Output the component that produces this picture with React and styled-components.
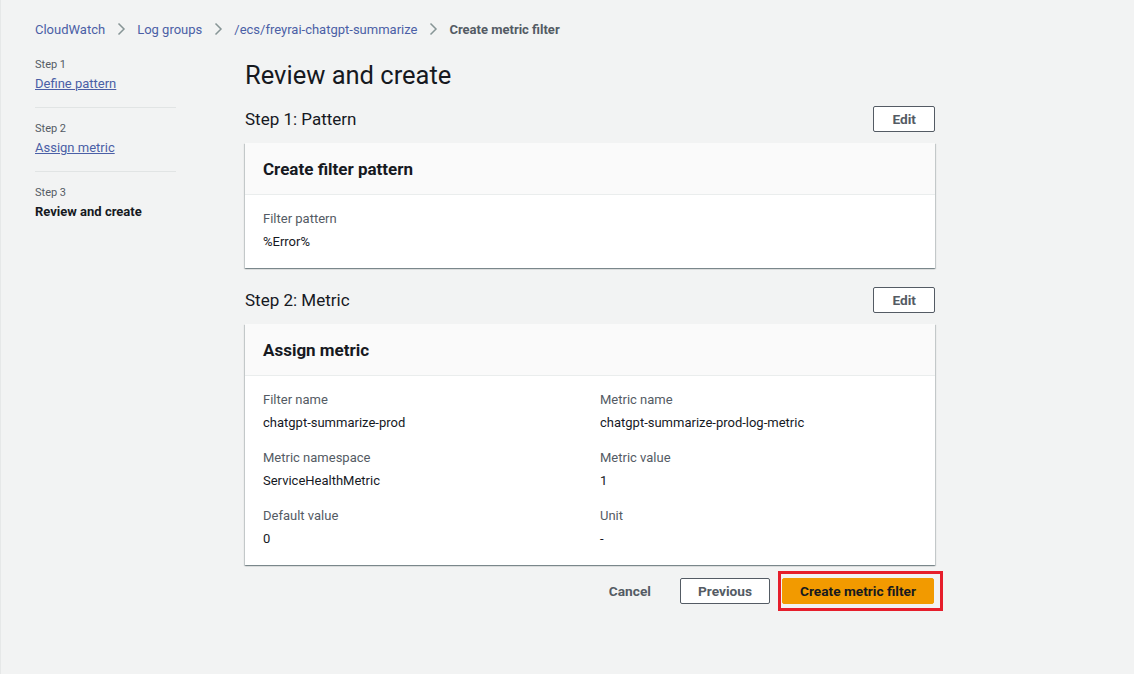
import React from 'react';
import styled, { createGlobalStyle } from 'styled-components';

const GlobalStyle = createGlobalStyle`
  html, body {
    margin: 0;
    padding: 0;
    background: #f2f3f3;
    font-family: Roboto, "Liberation Sans", Arial, sans-serif;
    color: #16191f;
  }
  #root {
    min-height: 674px;
  }
`;

const Page = styled.div`
  min-height: 674px;
  box-sizing: border-box;
  border-left: 1px solid #e6e8e8;
  padding: 20px 34px 0 34px;
`;

const Breadcrumbs = styled.nav`
  display: flex;
  align-items: center;
  gap: 10px;
  font-size: 13px;
  height: 18px;
`;

const Crumb = styled.a`
  color: #4b5fa6;
  text-decoration: none;
  cursor: pointer;
`;

const CurrentCrumb = styled.span`
  color: #545b64;
  font-weight: 700;
`;

const Chevron = () => (
  <svg width="12" height="14" viewBox="0 0 12 14" fill="none">
    <path d="M3.5 1.5 L9 7 L3.5 12.5" stroke="#879596" strokeWidth="1.5" />
  </svg>
);

const Layout = styled.div`
  display: flex;
  gap: 69px;
  margin-top: 19px;
`;

const SideNav = styled.ol`
  list-style: none;
  margin: 1px 0 0;
  padding: 0;
  width: 141px;
  flex-shrink: 0;
`;

const StepItem = styled.li`
  padding: 0 0 14px;
  margin-bottom: 14px;
  border-bottom: ${p => (p.$last ? 'none' : '1px solid #e1e4e4')};
`;

const StepLabel = styled.div`
  font-size: 11px;
  color: #545b64;
  line-height: 14px;
`;

const StepLink = styled.a`
  display: block;
  margin-top: 3px;
  font-size: 13px;
  line-height: 18px;
  color: #4b5fa6;
  text-decoration: underline;
  cursor: pointer;
`;

const StepCurrent = styled.div`
  margin-top: 3px;
  font-size: 13px;
  line-height: 18px;
  font-weight: 700;
  color: #16191f;
`;

const Main = styled.main`
  width: 690px;
`;

const Title = styled.h1`
  margin: 2px 0 0;
  font-size: 25.5px;
  font-weight: 400;
  line-height: 32px;
`;

const SectionHead = styled.div`
  display: flex;
  align-items: center;
  justify-content: space-between;
  height: 26px;
  margin-top: ${p => p.$top}px;
  margin-bottom: 11px;
`;

const SectionTitle = styled.h2`
  margin: 0;
  font-size: 17px;
  font-weight: 400;
  line-height: 22px;
`;

const Button = styled.button`
  box-sizing: border-box;
  height: 26px;
  padding: 0 ${p => p.$pad || 18}px;
  border: 1px solid #545b64;
  border-radius: 2px;
  background: #fff;
  color: #545b64;
  font-family: inherit;
  font-size: 13.7px;
  font-weight: 700;
  cursor: pointer;
`;

const LinkButton = styled(Button)`
  border-color: transparent;
  background: transparent;
  padding: 0 20px;
`;

const PrimaryButton = styled(Button)`
  border-color: #f29a00;
  background: #f29a00;
  color: #16191f;
  padding: 0 17px;
`;

const Highlight = styled.div`
  border: 3px solid #e61e2b;
  padding: 4px 6px 4px 1px;
  margin-right: -8px;
`;

const Card = styled.section`
  background: #fff;
  box-shadow: 0 1px 1px 0 rgba(0, 28, 36, 0.3),
    1px 1px 1px 0 rgba(0, 28, 36, 0.15),
    -1px 1px 1px 0 rgba(0, 28, 36, 0.15);
`;

const CardHeader = styled.header`
  height: 52px;
  box-sizing: border-box;
  padding: 0 18px;
  display: flex;
  align-items: center;
  background: #fafafa;
  border-bottom: 1px solid #eaeded;
  font-size: 17px;
  font-weight: 700;
`;

const CardBody = styled.div`
  padding: 15px 18px 17px;
  display: grid;
  grid-template-columns: ${p => (p.$cols === 2 ? '1fr 1fr' : '1fr')};
  column-gap: 20px;
  row-gap: 17px;
`;

const Field = styled.div`
  display: flex;
  flex-direction: column;
  gap: 5px;
`;

const FieldLabel = styled.div`
  font-size: 13px;
  line-height: 18px;
  color: #545b64;
`;

const FieldValue = styled.div`
  font-size: 13px;
  line-height: 18px;
  color: #16191f;
`;

const Actions = styled.div`
  display: flex;
  justify-content: flex-end;
  align-items: center;
  gap: 8px;
  margin-top: 6px;
`;

const metricFields = [
  ['Filter name', 'chatgpt-summarize-prod'],
  ['Metric name', 'chatgpt-summarize-prod-log-metric'],
  ['Metric namespace', 'ServiceHealthMetric'],
  ['Metric value', '1'],
  ['Default value', '0'],
  ['Unit', '-'],
];

export default function App() {
  return (
    <>
      <GlobalStyle />
      <Page>
        <Breadcrumbs>
          <Crumb>CloudWatch</Crumb>
          <Chevron />
          <Crumb>Log groups</Crumb>
          <Chevron />
          <Crumb>/ecs/freyrai-chatgpt-summarize</Crumb>
          <Chevron />
          <CurrentCrumb>Create metric filter</CurrentCrumb>
        </Breadcrumbs>

        <Layout>
          <SideNav>
            <StepItem>
              <StepLabel>Step 1</StepLabel>
              <StepLink>Define pattern</StepLink>
            </StepItem>
            <StepItem>
              <StepLabel>Step 2</StepLabel>
              <StepLink>Assign metric</StepLink>
            </StepItem>
            <StepItem $last>
              <StepLabel>Step 3</StepLabel>
              <StepCurrent>Review and create</StepCurrent>
            </StepItem>
          </SideNav>

          <Main>
            <Title>Review and create</Title>

            <SectionHead $top={15}>
              <SectionTitle>Step 1: Pattern</SectionTitle>
              <Button>Edit</Button>
            </SectionHead>
            <Card>
              <CardHeader>Create filter pattern</CardHeader>
              <CardBody>
                <Field>
                  <FieldLabel>Filter pattern</FieldLabel>
                  <FieldValue>%Error%</FieldValue>
                </Field>
              </CardBody>
            </Card>

            <SectionHead $top={19}>
              <SectionTitle>Step 2: Metric</SectionTitle>
              <Button>Edit</Button>
            </SectionHead>
            <Card>
              <CardHeader>Assign metric</CardHeader>
              <CardBody $cols={2}>
                {metricFields.map(([label, value]) => (
                  <Field key={label}>
                    <FieldLabel>{label}</FieldLabel>
                    <FieldValue>{value}</FieldValue>
                  </Field>
                ))}
              </CardBody>
            </Card>

            <Actions>
              <LinkButton>Cancel</LinkButton>
              <Button $pad={17}>Previous</Button>
              <Highlight>
                <PrimaryButton>Create metric filter</PrimaryButton>
              </Highlight>
            </Actions>
          </Main>
        </Layout>
      </Page>
    </>
  );
}
